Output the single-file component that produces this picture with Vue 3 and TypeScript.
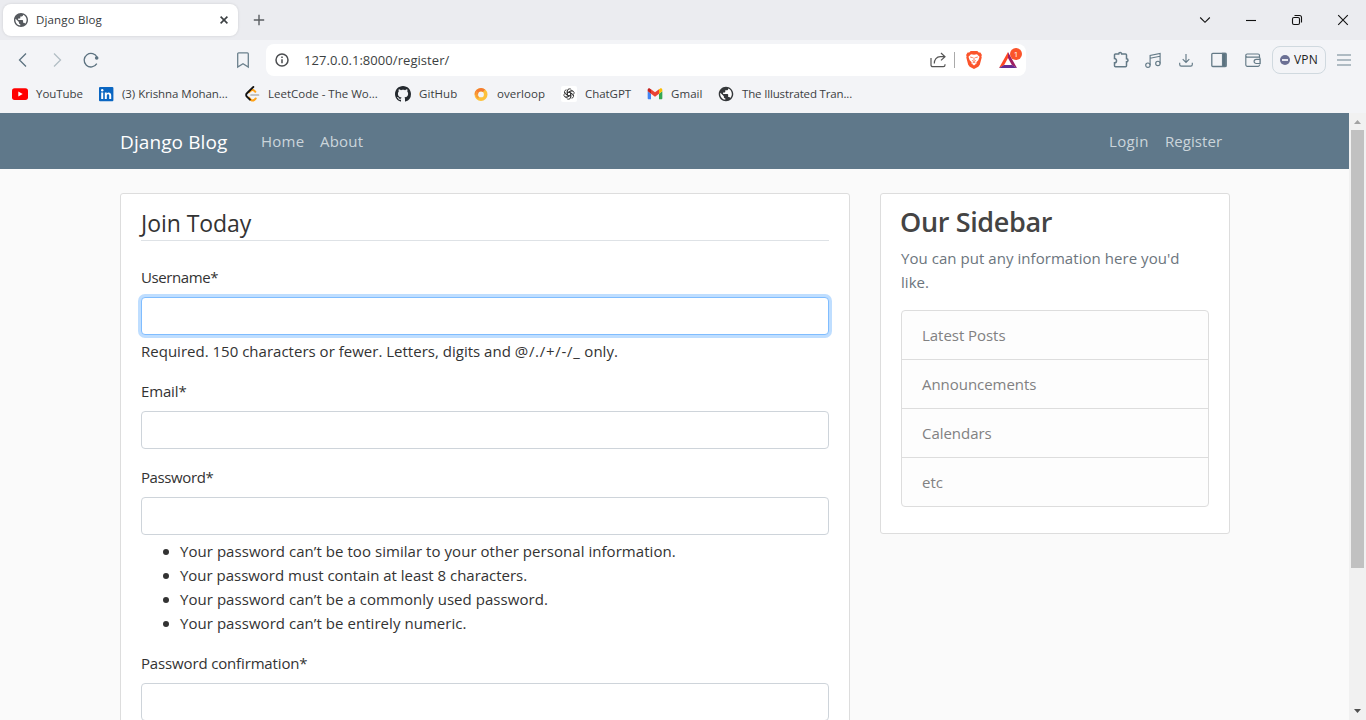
<script setup lang="ts">
interface Bookmark { id: string; label: string }
const bookmarks: Bookmark[] = [
  { id: 'youtube', label: 'YouTube' },
  { id: 'linkedin', label: '(3) Krishna Mohan...' },
  { id: 'leetcode', label: 'LeetCode - The Wo...' },
  { id: 'github', label: 'GitHub' },
  { id: 'overloop', label: 'overloop' },
  { id: 'chatgpt', label: 'ChatGPT' },
  { id: 'gmail', label: 'Gmail' },
  { id: 'site', label: 'The Illustrated Tran...' },
]
const rules: string[] = [
  'Your password can’t be too similar to your other personal information.',
  'Your password must contain at least 8 characters.',
  'Your password can’t be a commonly used password.',
  'Your password can’t be entirely numeric.',
]
const links: string[] = ['Latest Posts', 'Announcements', 'Calendars', 'etc']
const petals: number[] = [0, 60, 120, 180, 240, 300]
const globe = 'M12 2C6.480 2 2 6.480 2 12s4.480 10 10 10 10-4.480 10-10S17.520 2 12 2zm-1 17.930c-3.950-.49-7-3.850-7-7.930 0-.62.08-1.210.21-1.790L9 15v1c0 1.100.9 2 2 2v1.930zm6.900-2.540c-.26-.81-1-1.390-1.900-1.390h-1v-3c0-.55-.45-1-1-1H8v-2h2c.55 0 1-.45 1-1V7h2c1.100 0 2-.9 2-2v-.41c2.930 1.190 5 4.060 5 7.410 0 2.080-.8 3.970-2.100 5.390z'
</script>

<template>
  <div class="window">
    <header class="chrome">
      <div class="tabs">
        <div class="tab">
          <svg class="fav" viewBox="2 2 20 20"><circle cx="12" cy="12" r="9" fill="#fff" /><path :d="globe" fill="#55595e" /></svg>
          <span class="tab-title">Django Blog</span>
          <svg class="tab-close" viewBox="0 0 8 8"><path d="M.6.6l6.800 6.800M7.400.6L.6 7.400" stroke="#3c4043" stroke-width="1.600" /></svg>
        </div>
        <svg class="plus" viewBox="0 0 12 12"><path d="M6 .8v10.400M.8 6h10.400" stroke="#5b5e62" stroke-width="1.400" /></svg>
        <div class="controls">
          <svg width="12" height="12" viewBox="0 0 12 12"><path d="M1.200 3.500L6 8.300l4.800-4.800" /></svg>
          <svg width="12" height="12" viewBox="0 0 12 12"><path d="M1 6.500h10" /></svg>
          <svg width="12" height="12" viewBox="0 0 12 12"><rect x="1.500" y="3.500" width="7" height="7" rx="1.500" /><path d="M3.500 1.500h5a2 2 0 0 1 2 2v5" /></svg>
          <svg width="12" height="12" viewBox="0 0 12 12"><path d="M1.200 1.200l9.600 9.600M10.800 1.200L1.200 10.800" /></svg>
        </div>
      </div>

      <div class="toolbar">
        <div class="nav-icons">
          <svg class="back" viewBox="0 0 16 16"><path d="M11 1.500L4.500 8l6.500 6.500" /></svg>
          <svg class="fwd" viewBox="0 0 16 16"><path d="M5 1.500L11.500 8 5 14.500" /></svg>
          <svg class="reload" viewBox="0 0 16 16"><path d="M14.200 5.500A6.800 6.800 0 1 0 13.800 11.700" /><circle cx="13.700" cy="6" r="1.800" fill="#5c7280" stroke="none" /></svg>
          <svg class="mark" viewBox="0 0 16 16"><path d="M2.700 1.800a1 1 0 0 1 1-1h8.600a1 1 0 0 1 1 1V15L8 11.700 2.700 15z" /></svg>
        </div>
        <div class="address">
          <svg class="info" viewBox="0 0 14 14"><circle cx="7" cy="7" r="6" /><path d="M7 6.200v4M7 3.600v1.400" /></svg>
          <span class="url">127.0.0.1:8000/register/</span>
          <svg class="share" viewBox="0 0 16 16"><path d="M1 6v7a1.700 1.700 0 0 0 1.700 1.700h10.600A1.700 1.700 0 0 0 15 13v-.8M4.300 11.500c0-4 2.300-6.800 6-6.800h4.200M11 1l4 3.700-4 3.700" /></svg>
          <i class="divider"></i>
          <svg class="brave" viewBox="0 0 16 18"><path d="M4.700 0h6.600l1.500 1.500 1.600-.1 1.500 2.600-.5 1.300.3 1.200-1.900 7.300-1.500 1.900L8 18l-4.300-2.300-1.500-1.900L.3 6.500l.3-1.200L.1 4l1.500-2.600 1.600.1z" fill="#fb542b" /><path d="M5 3.200l3 .6 3-.6 2.500 2.600-1.200 3.400-2 2 .4 1L8 14.500l-2.700-2.300.4-1-2-2L2.500 5.800z" fill="#fff" /><path d="M4.200 6l2.600.7M11.800 6l-2.600.7M8 6.500v2.800M6.200 9.500L8 10.400l1.800-.9M6.500 12L8 11l1.500 1" fill="none" stroke="#fb542b" stroke-width=".8" /></svg>
          <span class="bat">
            <svg viewBox="0 0 18 16"><path d="M9 0L0 16l5-2.800L9 6z" fill="#ff4724" /><path d="M9 0l9 16-5-2.800L9 6z" fill="#9e1f63" /><path d="M0 16h18l-5-3.100H5z" fill="#662d91" /></svg>
            <b>1</b>
          </span>
        </div>
        <div class="actions">
          <svg viewBox="0 0 16 16"><path stroke-width="1.500" d="M2.500 2h3.200a1.500 1.500 0 0 1 3 0h3.800a1 1 0 0 1 1 1v3.800a1.500 1.500 0 0 1 0 3v4a1 1 0 0 1-1 1h-10a1 1 0 0 1-1-1v-3c2.700 0 2.700-4.200 0-4.200V3a1 1 0 0 1 1-1z" /></svg>
          <svg viewBox="0 0 16 16"><circle cx="2.900" cy="13.200" r="2.200" /><circle cx="12.900" cy="11.400" r="2.200" /><path d="M5.100 13.200V3.400l10-2v10M5.100 6.300l10-2" /></svg>
          <svg viewBox="0 0 16 16"><path d="M8 2v8.200M4.700 7.200L8 10.400l3.300-3.200M1.700 10.800v1.700a1.600 1.600 0 0 0 1.600 1.600h9.400a1.600 1.600 0 0 0 1.600-1.600v-1.700" /></svg>
          <svg viewBox="0 0 16 16"><rect x=".8" y="1.300" width="14.400" height="13.200" rx="1" stroke-width="1.300" /><path d="M11.500 1.300h3.200v13.200h-3.200z" fill="#5c7280" /></svg>
          <svg viewBox="0 0 16 16"><path d="M14.500 5.200V3.500a1.500 1.500 0 0 0-1.500-1.500H2.300a1.400 1.400 0 0 0-1.500 1.500v9.300a1.500 1.500 0 0 0 1.500 1.500H13a1.500 1.500 0 0 0 1.500-1.500M.8 3.500c0 1 .6 1.600 1.500 1.600h11.200a1.200 1.200 0 0 1 1.500 1.200v5.900M15.200 7.300h-4a2 2 0 0 0 0 4.200h4z" /></svg>
        </div>
        <div class="vpn"><i></i><span>VPN</span></div>
        <svg class="menu" viewBox="0 0 14 12"><path d="M0 1h14M0 6h14M0 11h14" /></svg>
      </div>

      <div class="bookmarks">
        <div v-for="b in bookmarks" :key="b.id" class="bookmark" :class="b.id">
          <svg v-if="b.id === 'youtube'" viewBox="0 0 16 16"><rect y="2.300" width="16" height="11.600" rx="2.600" fill="#f00" /><path d="M6.300 5.600v5L10.700 8z" fill="#fff" /></svg>
          <svg v-else-if="b.id === 'linkedin'" viewBox="0 0 16 16"><rect x="1" y="1" width="14.400" height="14.200" rx="1" fill="#0a66c2" /><path d="M3.200 6.500h2v6.500h-2zM6.800 6.500h1.900v1c1.200-1.900 4.500-1.300 4.500 1.700V13h-2V9.600c0-2-2.400-1.800-2.400 0V13h-2z" fill="#fff" /><circle cx="4.200" cy="4.300" r="1.200" fill="#fff" /></svg>
          <svg v-else-if="b.id === 'leetcode'" viewBox="0 0 16 16"><path d="M5 6.300l2-1.800a2.200 2.200 0 0 1 3 .1l1.300 1.200M5 11.600l2 2.300a2.700 2.700 0 0 0 3.300 0l1.400-1.400" fill="none" stroke="#ffa116" stroke-width="2" stroke-linecap="round" /><path d="M9.400.9L2.900 7.300a2.300 2.300 0 0 0 0 3.400l3 3" fill="none" stroke="#111" stroke-width="1.900" stroke-linecap="round" /><path d="M7 9h7.500" stroke="#b3b3b3" stroke-width="1.700" stroke-linecap="round" /></svg>
          <svg v-else-if="b.id === 'github'" viewBox="0 0 16 16"><path fill="#24292f" d="M8 0C3.580 0 0 3.580 0 8c0 3.540 2.290 6.530 5.470 7.590.4.070.55-.17.55-.38 0-.19-.01-.82-.01-1.490-2.010.37-2.530-.49-2.690-.94-.09-.23-.48-.94-.82-1.130-.28-.15-.68-.52-.01-.53.63-.01 1.080.58 1.230.82.72 1.210 1.870.87 2.330.66.07-.52.28-.87.51-1.070-1.780-.2-3.640-.89-3.640-3.950 0-.87.31-1.590.82-2.150-.08-.2-.36-1.020.08-2.120 0 0 .67-.21 2.200.82.64-.18 1.320-.27 2-.27s1.360.09 2 .27c1.530-1.040 2.200-.82 2.200-.82.44 1.100.16 1.920.08 2.120.51.56.82 1.270.82 2.150 0 3.070-1.870 3.750-3.650 3.950.29.25.54.73.54 1.480 0 1.070-.01 1.930-.01 2.200 0 .21.15.46.55.38A8.010 8.010 0 0 0 16 8c0-4.420-3.580-8-8-8z" /></svg>
          <svg v-else-if="b.id === 'overloop'" viewBox="0 0 16 16"><circle cx="8" cy="8.400" r="4.700" fill="none" stroke="#fdc13b" stroke-width="3.600" /><path d="M3.300 8.400A4.700 4.700 0 0 1 11 4.800" fill="none" stroke="#f47b34" stroke-width="3.200" /><path d="M4 5.500A5 5 0 0 0 5.500 12" fill="none" stroke="#f99b37" stroke-width="2" /></svg>
          <svg v-else-if="b.id === 'chatgpt'" viewBox="0 0 16 16"><rect width="16" height="16" rx="2" fill="#fff" /><g fill="none" stroke="#303030" stroke-width="1" transform="translate(1.300 1.300) scale(.84)"><path v-for="a in petals" :key="a" :transform="`rotate(${a} 8 8)`" d="M5.900 9.200V4.400a2.700 2.700 0 0 1 4.900-1.500M5.900 6.800L9.600 4.700a2.800 2.800 0 0 1 2.800.1" /></g></svg>
          <svg v-else-if="b.id === 'gmail'" viewBox="48 35 96 82"><path fill="#4285f4" d="M58 108h14V74L52 59v43c0 3.320 2.690 6 6 6" /><path fill="#34a853" d="M120 108h14c3.320 0 6-2.690 6-6V59l-20 15" /><path fill="#fbbc04" d="M120 48v26l20-15v-8c0-7.420-8.470-11.650-14.400-7.200" /><path fill="#ea4335" d="M72 74V48l24 18 24-18v26L96 92" /><path fill="#c5221f" d="M52 51v8l20 15V48l-5.600-4.200c-5.940-4.450-14.400-.22-14.400 7.200" /></svg>
          <svg v-else viewBox="1 1 22 22"><circle cx="12" cy="12" r="9" fill="#fff" /><path :d="globe" fill="#35383b" /></svg>
          <span>{{ b.label }}</span>
        </div>
      </div>
    </header>

    <div class="viewport">
      <div class="page">
        <nav class="navbar">
          <span class="brand">Django Blog</span>
          <span class="home">Home</span>
          <span class="about">About</span>
          <span class="login">Login</span>
          <span class="register">Register</span>
        </nav>
        <main class="columns">
          <section class="card form-card">
            <h2 class="legend">Join Today</h2>
            <div class="group">
              <label class="tight">Username*</label>
              <div class="input focused"></div>
              <p class="help">Required. 150 characters or fewer. Letters, digits and <span class="symbols">@/./+/-/_</span> only.</p>
            </div>
            <div class="group">
              <label class="snug">Email*</label>
              <div class="input"></div>
            </div>
            <div class="group">
              <label class="tight">Password*</label>
              <div class="input"></div>
              <ul class="rules"><li v-for="r in rules" :key="r">{{ r }}</li></ul>
            </div>
            <div class="group">
              <label class="snug">Password confirmation*</label>
              <div class="input"></div>
            </div>
          </section>
          <aside class="card side-card">
            <h3>Our Sidebar</h3>
            <p>You can put any information here you'd like.</p>
            <ul class="list"><li v-for="l in links" :key="l">{{ l }}</li></ul>
          </aside>
        </main>
      </div>
      <div class="scrollbar">
        <svg viewBox="0 0 7 4"><path d="M0 4L3.500 0 7 4z" fill="#a3a3a3" /></svg>
        <i></i>
        <svg viewBox="0 0 7 4"><path d="M0 0L3.500 4 7 0z" fill="#505050" /></svg>
      </div>
    </div>
  </div>
</template>

<style>
body { margin: 0; overflow: hidden; }
</style>
<style scoped>
.window, .window * { box-sizing: border-box; }
.window { width: 1366px; height: 720px; display: flex; flex-direction: column; overflow: hidden; font-family: "Open Sans", "Noto Sans", sans-serif; font-size: 15px; color: #333; }
h2, h3, p, ul { margin: 0; padding: 0; }
ul { list-style: none; }
svg { display: block; flex: none; overflow: visible; }

.chrome { height: 113px; flex: none; background: #f3f4f7; }
.tabs { height: 40px; background: #ebecf0; display: flex; align-items: center; padding-left: 3px; }
.tab { width: 235px; height: 32px; background: #fff; border-radius: 8px; box-shadow: 0 0 3px rgba(0, 0, 0, .12); display: flex; align-items: center; padding: 0 10px 0 11px; }
.fav { width: 14px; height: 14px; }
.tab-title { flex: 1; margin: -2px 0 0 8px; font-size: 11.5px; letter-spacing: .15px; color: #35383b; }
.tab-close { width: 8px; height: 8px; }
.plus { width: 12px; height: 12px; margin-left: 15px; }
.controls { margin-left: auto; display: flex; gap: 34px; padding-right: 17px; }
.controls svg { fill: none; stroke: #111; stroke-width: 1.1; }

.toolbar { height: 40px; display: flex; align-items: center; }
.nav-icons { width: 266px; display: flex; align-items: center; padding-left: 15px; }
.nav-icons svg { width: 16px; height: 16px; fill: none; stroke: #5c7280; stroke-width: 1.3; }
.nav-icons .fwd { margin-left: 18px; stroke: #b2bec5; }
.nav-icons .reload { margin-left: 18px; }
.nav-icons .mark { margin-left: 136px; stroke: #6b808d; }
.address { width: 760px; height: 32px; background: #fff; border-radius: 8px; display: flex; align-items: center; padding-left: 9px; }
.info { width: 14px; height: 14px; fill: none; stroke: #4b4d50; stroke-width: 1.5; }
.url { margin-left: 15px; width: 626px; font-size: 13px; letter-spacing: .06px; color: #3d3f42; white-space: nowrap; }
.share { width: 16px; height: 16px; fill: none; stroke: #555; stroke-width: 1.2; }
.divider { width: 1px; height: 16px; background: #aaa; margin-left: 8px; }
.brave { width: 16px; height: 18px; margin-left: 11px; }
.bat { position: relative; width: 18px; height: 16px; margin-left: 17px; }
.bat svg { width: 18px; height: 16px; }
.bat b { position: absolute; left: 11px; top: -4px; width: 12px; height: 12px; border-radius: 6px; background: #fb542b; color: #fff; font-size: 8px; font-weight: 400; line-height: 12px; text-align: center; }
.actions { display: flex; gap: 17px; margin-left: 87px; }
.actions svg { width: 16px; height: 16px; fill: none; stroke: #647a87; stroke-width: 1.15; }
.actions svg:nth-child(2), .actions svg:nth-child(3), .actions svg:nth-child(4) { margin-left: -1px; margin-right: 1px; }
.vpn { width: 54px; height: 28px; margin-left: 11px; border: 1px solid #d0d9df; border-radius: 8px; display: flex; align-items: center; padding-left: 7px; font-size: 12px; color: #222; letter-spacing: .2px; }
.vpn span { margin-top: -1px; }
.vpn i { width: 10px; height: 10px; border-radius: 5px; background: #6b7094; display: flex; align-items: center; justify-content: center; margin-right: 4px; }
.vpn i::after { content: ""; width: 6px; height: 2px; background: #e6e7ef; }
.menu { width: 14px; height: 12px; margin-left: 11px; fill: none; stroke: #6d8290; stroke-width: 1.2; }

.bookmarks { height: 28px; display: grid; grid-template-columns: 86px 146px 151px 78px 88px 86px 71px 150px; align-items: center; padding-left: 12px; }
.bookmark { display: flex; align-items: center; gap: 8px; font-size: 11.5px; color: #3b3e42; white-space: nowrap; }
.bookmark span { margin-top: -2px; }
.bookmark svg { width: 16px; height: 16px; }
.youtube, .chatgpt, .linkedin { letter-spacing: -.05px; }
.github, .overloop, .gmail { letter-spacing: .06px; }
.site { letter-spacing: -.16px; }

.viewport { height: 607px; display: flex; }
.page { width: 1349px; background: #fafafa; overflow: hidden; }
.navbar { height: 56px; background: #5f788a; display: flex; align-items: center; padding: 0 125px 1px 120px; color: #cbd5db; line-height: 24px; }
.navbar span { padding-top: 0; }
.navbar .brand { padding-top: 2px; }
.brand { width: 141px; font-size: 19px; letter-spacing: .1px; color: #fff; }
.home { width: 59px; letter-spacing: .25px; }
.about { letter-spacing: .2px; }
.login { margin-left: auto; width: 56px; letter-spacing: .35px; }
.register { width: 59px; letter-spacing: .05px; }

.columns { display: flex; align-items: flex-start; gap: 30px; padding: 24px 0 0 120px; }
.card { background: #fff; border: 1px solid #ddd; border-radius: 3px; padding: 10px 20px; }
.form-card { width: 730px; height: 760px; }
.legend { height: 37px; border-bottom: 1px solid #dee2e6; margin-bottom: 24px; font-size: 23px; font-weight: 400; line-height: 39px; letter-spacing: -.05px; }
.group { margin-bottom: 16px; width: 688px; }
label { display: block; height: 24px; line-height: 24px; margin-bottom: 8px; }
.tight { letter-spacing: -.4px; }
.snug { letter-spacing: -.15px; }
.input { height: 38px; background: #fff; border: 1px solid #ced4da; border-radius: 4px; }
.focused { border-color: #80bdff; box-shadow: 0 0 0 3px #bfdeff; }
.help { margin-top: 4px; height: 24px; line-height: 24px; letter-spacing: .01px; }
.symbols { letter-spacing: .7px; }
.rules { padding: 4px 0 0 39px; }
.rules li { height: 24px; line-height: 24px; letter-spacing: .05px; display: flex; }
.rules li:nth-child(2) { letter-spacing: -.02px; }
.rules li::before { content: ""; width: 6px; height: 6px; border-radius: 3px; background: #333; margin: 10px 11px 0 -17px; }

.side-card { width: 350px; height: 341px; padding-left: 20px; }
h3 { height: 34px; margin: 0 0 8px -1px; font-size: 27px; font-weight: 600; line-height: 36px; letter-spacing: -.35px; color: #444; }
.side-card p { height: 48px; margin: 0 0 16px; line-height: 24px; letter-spacing: .05px; color: #6c757d; }
.list { border: 1px solid #ddd; border-radius: 4px; background: #fdfdfd; overflow: hidden; width: 308px; }
.list li { height: 49px; line-height: 48px; border-bottom: 1px solid #ddd; padding-left: 20px; letter-spacing: -.04px; color: #818182; }
.list li:last-child { height: 48px; border-bottom: 0; }

.scrollbar { width: 17px; background: #f1f1f1; display: flex; flex-direction: column; align-items: center; padding: 7px 0 7px; }
.scrollbar svg { width: 7px; height: 4px; }
.scrollbar i { width: 13px; height: 438px; margin: 6px 0 auto; background: #c1c1c1; }
</style>
